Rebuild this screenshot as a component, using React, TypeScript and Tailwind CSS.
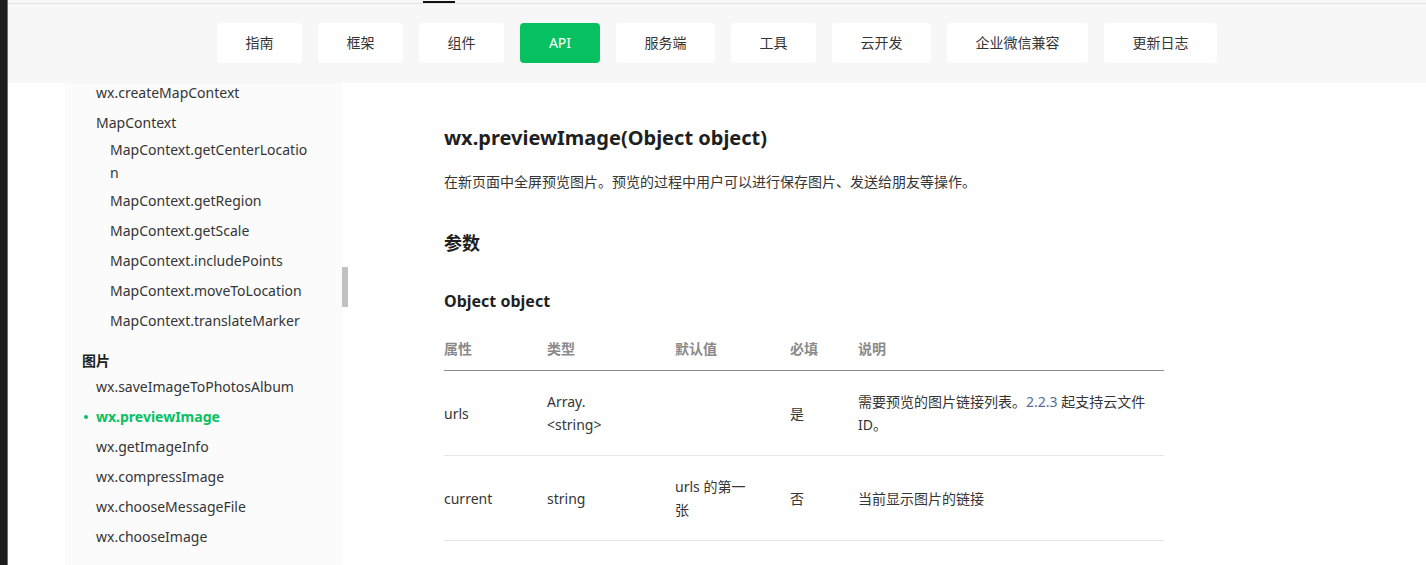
import React from 'react';

const font = "font-['Noto_Sans','Noto_Sans_CJK_SC',sans-serif]";

const navItems = ['指南', '框架', '组件', 'API', '服务端', '工具', '云开发', '企业微信兼容', '更新日志'];

const mapItems = [
  'MapContext.getRegion',
  'MapContext.getScale',
  'MapContext.includePoints',
  'MapContext.moveToLocation',
  'MapContext.translateMarker',
];

const imageItems = [
  { label: 'wx.saveImageToPhotosAlbum' },
  { label: 'wx.previewImage', active: true },
  { label: 'wx.getImageInfo' },
  { label: 'wx.compressImage' },
  { label: 'wx.chooseMessageFile' },
  { label: 'wx.chooseImage' },
];

function Header() {
  return (
    <div className="bg-[#f7f7f7] h-[83px] flex flex-col">
      {/* remnant of the top nav, scrolled out */}
      <div className="h-[3px] flex">
        <div className="ml-[415px] w-[32px] h-[2px] mt-[1px] bg-[#111]"></div>
      </div>
      <div className="border-t border-[#e3e3e3] flex-1 flex justify-center pt-[19px]">
        <div className="flex gap-4 h-[40px]">
          {navItems.map((item) => (
            <button
              key={item}
              className={
                item === 'API'
                  ? 'px-[29px] h-[40px] rounded bg-[#07c160] text-white text-sm'
                  : 'px-[28.5px] h-[40px] rounded bg-white text-[#353535] text-sm'
              }
            >
              {item}
            </button>
          ))}
        </div>
      </div>
    </div>
  );
}

function Sidebar() {
  return (
    <div className="w-[277px] bg-[#fbfbfb] overflow-hidden text-sm text-[#353535]">
      <div className="-mt-[5px]">
        <div className="h-[30px] flex items-center pl-[31px]">wx.createMapContext</div>
        <div className="h-[30px] flex items-center pl-[31px]">MapContext</div>
        <div className="pl-[45px] leading-[23px] pb-[2px]">
          MapContext.getCenterLocatio
          <br />n
        </div>
        {mapItems.map((item) => (
          <div key={item} className="h-[30px] flex items-center pl-[45px]">
            {item}
          </div>
        ))}
        <div className="mt-[13px] h-[23px] flex items-center pl-[17px] font-bold text-[#1f1f1f]">图片</div>
        {imageItems.map((item) =>
          item.active ? (
            <div key={item.label} className="h-[30px] flex items-center pl-[19px] text-[#07c160] font-bold">
              <span className="w-[4px] h-[4px] rounded-full bg-[#07c160] mr-[8px]"></span>
              {item.label}
            </div>
          ) : (
            <div key={item.label} className="h-[30px] flex items-center pl-[31px]">
              {item.label}
            </div>
          )
        )}
      </div>
    </div>
  );
}

function ParamTable() {
  const cols = 'grid grid-cols-[103px_128px_115px_68px_306px] items-center';
  return (
    <div className="w-[720px] mt-[15px] text-sm">
      <div className={`${cols} h-[43px] border-b border-[#8c8c8c] font-bold text-[#8a8a8a]`}>
        <div>属性</div>
        <div>类型</div>
        <div>默认值</div>
        <div>必填</div>
        <div>说明</div>
      </div>
      <div className={`${cols} h-[85px] border-b border-[#e6e6e6] text-[#353535] leading-[23px]`}>
        <div>urls</div>
        <div>
          Array.
          <br />
          &lt;string&gt;
        </div>
        <div></div>
        <div>是</div>
        <div>
          需要预览的图片链接列表。<span className="text-[#576b95]">2.2.3</span> 起支持云文件
          <br />
          ID。
        </div>
      </div>
      <div className={`${cols} h-[85px] border-b border-[#e6e6e6] text-[#353535] leading-[23px]`}>
        <div>current</div>
        <div>string</div>
        <div>
          urls 的第一
          <br />张
        </div>
        <div>否</div>
        <div>当前显示图片的链接</div>
      </div>
    </div>
  );
}

export default function App() {
  return (
    <div className={`${font} flex h-[565px] w-[1426px] overflow-hidden bg-white`}>
      <div className="w-[8px] bg-[#1e1e1e] border-r border-[#2f7fd0]"></div>
      <div className="flex-1 flex flex-col min-w-0">
        <Header />
        <div className="flex flex-1 min-h-0">
          <div className="w-[57px] bg-white"></div>
          <Sidebar />
          <div className="w-[6px] bg-white pt-[184px]">
            <div className="h-[40px] bg-[#c1c1c1]"></div>
          </div>
          <div className="flex-1 pl-[96px] pt-[41px] text-[#1f1f1f]">
            <h1 className="text-[20px] leading-[28px] font-bold">wx.previewImage(Object object)</h1>
            <p className="mt-[19px] text-sm leading-[22px] text-[#353535]">
              在新页面中全屏预览图片。预览的过程中用户可以进行保存图片、发送给朋友等操作。
            </p>
            <h2 className="mt-[37px] text-[18px] leading-[26px] font-bold">参数</h2>
            <h3 className="mt-[33px] text-[16px] leading-[24px] font-bold">Object object</h3>
            <ParamTable />
          </div>
        </div>
      </div>
    </div>
  );
}
